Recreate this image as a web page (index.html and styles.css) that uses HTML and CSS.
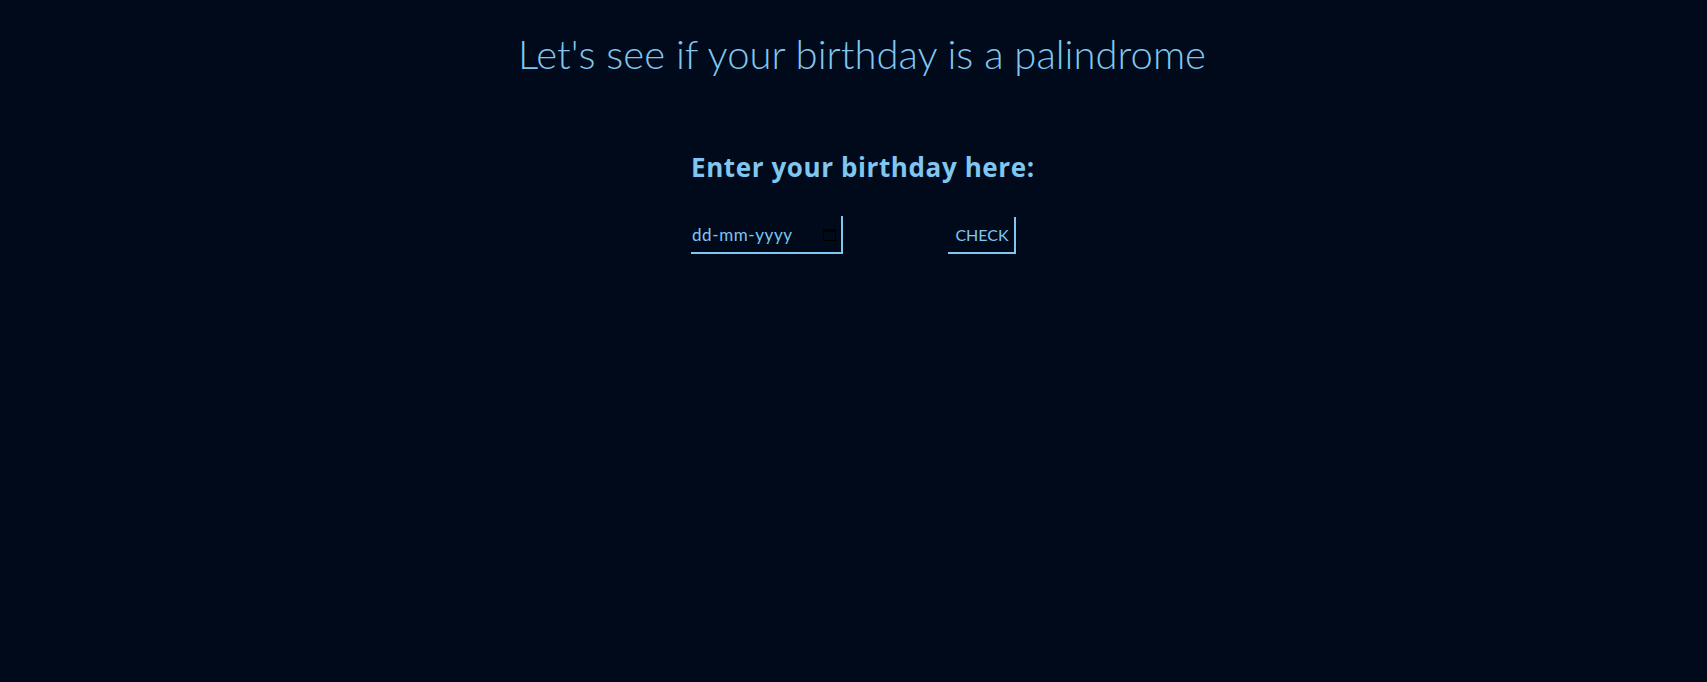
FILE: index.html
```html
<!DOCTYPE html>
<html lang="en">
<head>
<meta charset="utf-8">
<title>Palindrome Birthday</title>
<link rel="stylesheet" href="styles.css">
</head>
<body>
<h1 class="title">Let's see if your birthday is a palindrome</h1>
<main class="panel">
  <label class="label" for="dob">Enter your birthday here:</label>
  <div class="row">
    <div class="date-field">
      <input class="date" id="dob" type="text" placeholder="dd-mm-yyyy">
      <svg class="cal" width="13" height="13" viewBox="0 0 13 13" aria-hidden="true">
        <rect x="0.5" y="1.5" width="12" height="11" fill="none" stroke="#000" stroke-width="1"/>
        <rect x="0.5" y="1.5" width="12" height="2.5" fill="#000"/>
      </svg>
    </div>
    <button class="check" type="button">CHECK</button>
  </div>
</main>
</body>
</html>
```

FILE: styles.css
```css
html, body {
  margin: 0;
  height: 100%;
}
body {
  background: #010a1b;
  color: #7fc7f0;
  font-family: "Lato", "Liberation Sans", sans-serif;
}
.title {
  margin: 0;
  padding: 30px 0 0 17px;
  text-align: center;
  font-family: "Lato", sans-serif;
  font-weight: 300;
  font-size: 40px;
  line-height: 48px;
  color: #7fc7f0;
}
.panel {
  width: 325px;
  margin: 0 auto;
  padding-top: 74px;
  display: flex;
  flex-direction: column;
  align-items: flex-start;
}
.label {
  white-space: nowrap;
  font-family: "Open Sans", sans-serif;
  font-weight: 700;
  font-size: 26px;
  line-height: 30px;
  letter-spacing: 0.6px;
}
.row {
  display: flex;
  justify-content: space-between;
  width: 100%;
  margin-top: 34px;
}
.date-field {
  position: relative;
  width: 152px;
  height: 38px;
}
.date {
  width: 100%;
  height: 100%;
  box-sizing: border-box;
  background: transparent;
  color: #7fc7f0;
  border: none;
  border-right: 2px solid #7fc7f0;
  border-bottom: 2px solid #7fc7f0;
  padding: 0 0 0 1px;
  font-family: "Lato", sans-serif;
  font-size: 17px;
  letter-spacing: 0.6px;
  outline: none;
}
.date::placeholder {
  color: #7fc7f0;
  opacity: 1;
}
.cal {
  position: absolute;
  right: 7px;
  top: 12px;
}
.check {
  width: 68px;
  height: 37px;
  margin-top: 1px;
  box-sizing: border-box;
  background: transparent;
  color: #7fc7f0;
  border: none;
  border-right: 2px solid #7fc7f0;
  border-bottom: 2px solid #7fc7f0;
  padding: 0 0 0 2px;
  font-family: "Lato", sans-serif;
  font-size: 16px;
  cursor: pointer;
}
```
